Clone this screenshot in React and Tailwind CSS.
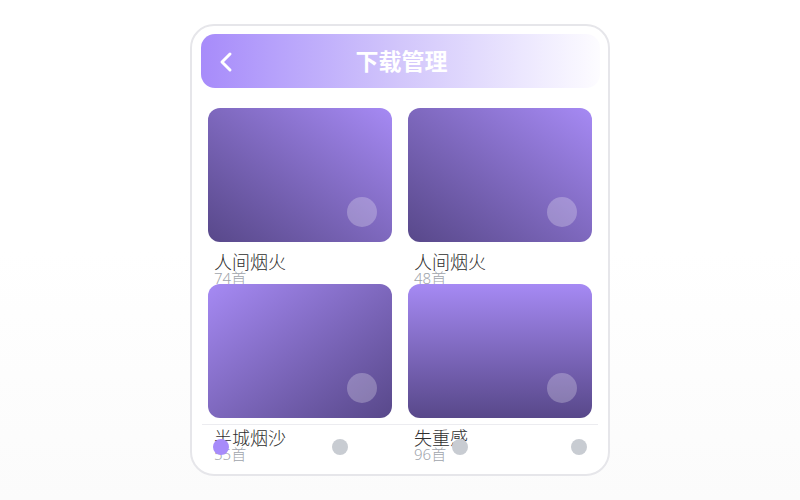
import React from "react";

const items = [
  { title: "人间烟火", count: "74首", grad: "bg-gradient-to-bl from-[#a68af4] to-[#58488a]" },
  { title: "人间烟火", count: "48首", grad: "bg-gradient-to-bl from-[#a68af4] to-[#58488a]" },
  { title: "半城烟沙", count: "55首", grad: "bg-gradient-to-br from-[#a68af4] to-[#58488a]" },
  { title: "失重感", count: "96首", grad: "bg-gradient-to-b from-[#a68af4] to-[#58488a]" },
];

export default function App() {
  return (
    <div
      className="w-[800px] h-[500px] flex items-center justify-center bg-gradient-to-b from-white via-white to-[#fbfbfb]"
      style={{ fontFamily: '"Noto Sans", "Noto Sans CJK SC", sans-serif' }}
    >
      <div className="relative w-[420px] h-[452px] bg-white border-2 border-[#e6e6ea] rounded-[24px] overflow-hidden">
        <div className="mt-[8px] ml-[9px] w-[399px] h-[54px] rounded-[14px] bg-gradient-to-r from-[#a78bfa] via-[#d2c6fb] to-[#fdfcff] relative flex items-center justify-center">
          <svg
            className="absolute left-[18px] top-[17px]"
            width="14"
            height="22"
            viewBox="0 0 14 22"
            fill="none"
          >
            <path d="M11 3 L3 11 L11 19" stroke="white" strokeWidth="3" strokeLinecap="round" strokeLinejoin="round" />
          </svg>
          <span className="text-white text-[23px] font-bold leading-none ml-[2px]">下载管理</span>
        </div>

        <div className="grid grid-cols-2 gap-x-[16px] px-[16px] mt-[20px]">
          {items.map((it, i) => (
            <div key={i} className="flex flex-col h-[176px]">
              <div className={`relative h-[134px] rounded-[12px] ${it.grad}`}>
                <div className="absolute right-[15px] bottom-[15px] w-[30px] h-[30px] rounded-full bg-white/25" />
              </div>
              <div className="mt-[10px] pl-[6px] text-[18px] font-light leading-[20px] text-[#2e2e2e]">{it.title}</div>
              <div className="pl-[6px] text-[15px] font-light leading-[12px] text-[#a0a4ab]">{it.count}</div>
            </div>
          ))}
        </div>

        <div className="absolute left-[10px] right-[10px] top-[398px] h-[44px] border-t border-[#ececf0] flex items-center justify-between px-[11px]">
          <div className="w-[16px] h-[16px] rounded-full bg-[#a78bfa]" />
          <div className="w-[16px] h-[16px] rounded-full bg-[#c8ccd2]" />
          <div className="w-[16px] h-[16px] rounded-full bg-[#c8ccd2]" />
          <div className="w-[16px] h-[16px] rounded-full bg-[#c8ccd2]" />
        </div>
      </div>
    </div>
  );
}
